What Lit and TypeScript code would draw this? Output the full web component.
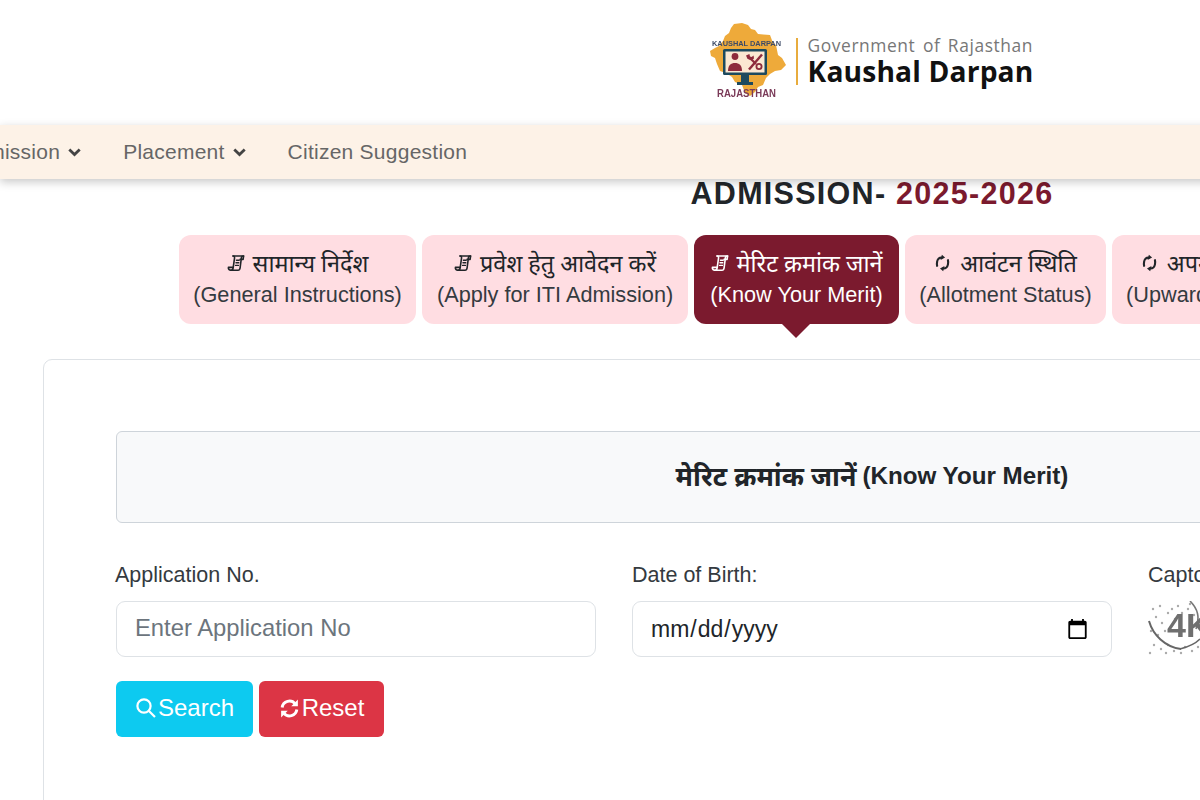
import { LitElement, html, css, svg } from "lit";
import { customElement } from "lit/decorators.js";

const scroll = svg`<svg class="ico" viewBox="0 0 18 18" width="18" height="18" fill="none" stroke="currentColor" stroke-width="1.6" stroke-linejoin="round" stroke-linecap="round"><path d="M6 2h10.6l-.5 3.4h-3"/><path d="M6 2c1.4 0 1.7 1 1.5 2.4L6.2 13.6c-.2 1.4-.9 2.6-2.4 2.6H11c1.2 0 1.9-.9 2.1-2.2L14.4 3.6c.1-1 .8-1.6 2.2-1.6"/><path d="M1.4 13.4h4.8M1.4 13.4c-.3 1.6.8 2.8 2.4 2.8"/><path d="M9.4 6.2h2.8M9 8.8h2.8M8.6 11.4h2.8" stroke-width="1.4"/></svg>`;
const cycle = svg`<svg class="ico cy" viewBox="0 0 16 18" width="16" height="18" fill="none" stroke="currentColor" stroke-width="2.1" stroke-linecap="round"><g transform="skewX(-8) translate(2 0)"><path d="M6.4 3.6C3.8 3.4 2.4 5 2.2 7.4c-.1 1.6 0 3 .6 4.4"/><path d="M9.2 14.4c2.6.2 4-1.4 4.2-3.8.1-1.6 0-3-.6-4.4"/><path d="M6 .8l3.6 2.8L5.4 6z" fill="currentColor" stroke="none"/><path d="M9.6 17.2L6 14.4l4.2-2.4z" fill="currentColor" stroke="none"/></g></svg>`;
const chev = svg`<svg class="chev" viewBox="0 0 13 9" width="13" height="9" fill="none" stroke="currentColor" stroke-width="2.8"><path d="M1.3 1.6 6.5 6.6l5.2-5"/></svg>`;

const tabs = [
  { hi: "सामान्य निर्देश", en: "(General Instructions)", icon: scroll, w: 237 },
  { hi: "प्रवेश हेतु आवेदन करें", en: "(Apply for ITI Admission)", icon: scroll, w: 266.2 },
  { hi: "मेरिट क्रमांक जानें", en: "(Know Your Merit)", icon: scroll, w: 204.6, active: true },
  { hi: "आवंटन स्थिति", en: "(Allotment Status)", icon: cycle, w: 201.5 },
  { hi: "अपग्रेडेशन स्थिति", en: "(Upward Movement)", icon: cycle, w: 224 },
];

const dots = [[5,8],[12,5],[20,12],[8,16],[14,22],[3,30],[10,34],[17,30],[6,44],[13,48],[20,44],[26,50],[24,8],[30,5],[34,12],[27,18],[40,8],[46,14],[37,46],[44,50],[50,46],[2,52],[18,52],[33,52],[42,3]];

@customElement("app-root")
export class AppRoot extends LitElement {
  static styles = css`
    :host { display: block; width: 1200px; height: 800px; overflow: hidden; background: #fff; color: #212529; font-family: "Liberation Sans", Arial, sans-serif; }
    .page { width: 1744px; }
    header { height: 125px; display: flex; justify-content: center; align-items: flex-start; padding: 22px 3px 0 0; box-sizing: border-box; }
    .logo { display: flex; align-items: center; gap: 8px; height: 80px; }
    .mark { filter: blur(.4px); }
    .divider { width: 2px; height: 47px; background: #e8ac3d; margin: -2px 2px 0 0; }
    .brand { display: flex; flex-direction: column; font-family: "Open Sans", sans-serif; margin-top: -4px; }
    .gov { font-size: 17.4px; line-height: 22px; color: #777; letter-spacing: .58px; word-spacing: 2.4px; white-space: nowrap; }
    .kd { font-size: 28.2px; line-height: 30px; font-weight: 700; color: #111; white-space: nowrap; letter-spacing: .15px; }
    nav { height: 54px; background: #fdf2e7; box-shadow: 0 3px 9px rgba(0,0,0,.22); display: flex; align-items: center; gap: 42px; position: relative; color: #666; font-size: 21px; letter-spacing: .25px; white-space: nowrap; }
    nav .item { display: flex; align-items: center; gap: 8px; }
    nav .first { margin-left: -39px; }
    nav .item span { display: block; margin-top: -1px; }
    .chev { color: #444; }
    h1 { margin: 0; height: 56px; text-align: center; font-size: 30.5px; line-height: 28px; font-weight: 700; letter-spacing: 1.28px; color: #212529; }
    h1 span { color: #7b1a2e; }
    .tabs { display: flex; gap: 6px; padding-left: 179px; }
    .tab { box-sizing: border-box; height: 89px; border-radius: 12px; background: #ffdde2; display: flex; flex-direction: column; align-items: center; justify-content: center; font-size: 21.7px; line-height: 31px; color: #343a40; white-space: nowrap; position: relative; flex: none; padding-bottom: 2px; }
    .tab.active { background: #7b1a2e; color: #fff; }
    .tab.active::after { content: ""; position: absolute; left: 50%; top: 100%; margin-left: -14px; border: 14px solid transparent; border-bottom: 0; border-top-color: #7b1a2e; }
    .hi { display: flex; align-items: center; gap: 8px; font-family: "Noto Sans", "Liberation Sans", sans-serif; font-size: 23.4px; color: #212529; }
    .active .hi { color: #fff; }
    .ico { flex: none; }
    .cy { margin-right: 2px; }
    .card { margin: 35px 0 0 43px; width: 1658px; height: 600px; box-sizing: border-box; border: 1px solid #dee2e6; border-radius: 9px; padding: 71px 72px 0; }
    .title { height: 92px; box-sizing: border-box; border: 1px solid #ced4da; border-radius: 6px; background: #f8f9fa; display: flex; align-items: center; justify-content: center; gap: 6px; font-size: 24.2px; font-weight: 700; color: #212529; padding-bottom: 3px; }
    .title .big { font-family: "Noto Sans", "Liberation Sans", sans-serif; font-size: 26.8px; line-height: 36px; }
    .form { display: grid; grid-template-columns: repeat(3, 480px); column-gap: 36px; margin-top: 39px; }
    label { display: block; font-size: 21.5px; line-height: 26px; color: #343a40; margin: 0 0 13px; white-space: nowrap; }
    .shift { margin-left: -1px; }
    input { box-sizing: border-box; display: block; width: 480px; height: 56px; border: 1px solid #dee2e6; border-radius: 9px; padding: 0 18px 2px; font: 23.8px "Liberation Sans", Arial, sans-serif; color: #212529; background: #fff; }
    input[type="date"] { font-size: 23px; padding: 0 20px 0 17px; }
    input::placeholder { color: #6c757d; }
    .captcha { display: block; filter: blur(.5px); }
    .actions { display: flex; gap: 6px; margin-top: 24px; }
    button { height: 56px; border: 0; border-radius: 6px; display: flex; align-items: center; justify-content: center; gap: 1px; font: 24px "Liberation Sans", Arial, sans-serif; color: #fff; padding: 0 0 2px; }
    .search { width: 137px; background: #0dcaf0; }
    .reset { width: 125px; background: #dc3545; gap: 2px; }
  `;

  render() {
    return html`<div class="page">
      <header>
        <div class="logo">
          <svg class="mark" width="80" height="80" viewBox="0 0 80 80" role="img" aria-label="Kaushal Darpan logo">
            <path d="M34 1l6 2 3 4 4 1 3 4 12 1 3 8 3 2 2 10 4 3 4 7-5 5-6 1-5 3-4 4-3 7-5 2-3 5-5 4-5-3-3-8-7-3-3-5-6-4-6-2-3-7-2-6-4-2-1-5 5-3 4-2 4-5 2-5 4-3 2-5 3-4z" fill="#eeaa3a"/>
            <text x="38.5" y="24" text-anchor="middle" font-family="Liberation Sans" font-size="7.6" font-weight="700" fill="#3c4a66" textLength="69" lengthAdjust="spacingAndGlyphs">KAUSHAL DARPAN</text>
            <rect x="15" y="27" width="44" height="26" fill="#1d4a5e" rx="1.5"/>
            <rect x="17.5" y="29.5" width="39" height="21" fill="#fbe8d2"/>
            <circle cx="27" cy="34.5" r="3.4" fill="#8e2b3c"/>
            <path d="M20 49c0-6 3-8 7-8s7 2 7 8z" fill="#8e2b3c"/>
            <path d="M38 33.5l3.4-1.6.6 2.6 1.6.4 2-1.4.4 3-2.4 1.8-1.6-.2-2.6-1.4z" fill="#8e2b3c"/>
            <path d="M43 37l5 5" stroke="#8e2b3c" stroke-width="2.2"/>
            <path d="M54 32.5 L41 47.5" stroke="#8e2b3c" stroke-width="2.4"/>
            <circle cx="51" cy="44.5" r="2.6" fill="none" stroke="#8e2b3c" stroke-width="1.8"/>
            <rect x="33" y="53" width="8" height="7" fill="#1d4a5e"/><rect x="29" y="60" width="16" height="3" fill="#1d4a5e"/>
            <text x="38.5" y="74.5" text-anchor="middle" font-family="Liberation Sans" font-size="10" font-weight="700" fill="#7a3a58" textLength="59" lengthAdjust="spacingAndGlyphs">RAJASTHAN</text>
          </svg>
          <div class="divider"></div>
          <div class="brand"><div class="gov">Government of Rajasthan</div><div class="kd">Kaushal Darpan</div></div>
        </div>
      </header>
      <nav>
        <div class="item first"><span>Admission</span> ${chev}</div>
        <div class="item"><span>Placement</span> ${chev}</div>
        <div class="item"><span>Citizen Suggestion</span></div>
      </nav>
      <h1>ADMISSION- <span>2025-2026</span></h1>
      <div class="tabs">
        ${tabs.map(t => html`<div class="tab ${t.active ? "active" : ""}" style="width:${t.w}px"><div class="hi">${t.icon}<span>${t.hi}</span></div><div>${t.en}</div></div>`)}
      </div>
      <div class="card">
        <div class="title"><span class="big">मेरिट क्रमांक जानें</span><span>(Know Your Merit)</span></div>
        <div class="form">
          <div><label class="shift">Application No.</label><input type="text" placeholder="Enter Application No" /></div>
          <div><label>Date of Birth:</label><input type="date" /></div>
          <div><label>Captcha</label>
            <svg class="captcha" width="160" height="56" viewBox="0 0 160 56">
              <g fill="#aaa">${dots.map(d => svg`<circle cx=${d[0]} cy=${d[1]} r="1.2"/>`)}</g>
              <path d="M1 20c4 14 16 26 32 28" fill="none" stroke="#666" stroke-width="2"/>
              <path d="M32 48c8-2 14-4 20-10" fill="none" stroke="#666" stroke-width="1.6"/>
              <path d="M42 0c8 8 10 16 6 28" fill="none" stroke="#777" stroke-width="1.6"/>
              <text x="19" y="36" font-family="Liberation Sans" font-size="34" font-weight="700" fill="#6f6f6f">4K</text>
            </svg>
          </div>
        </div>
        <div class="actions">
          <button class="search"><svg width="22" height="22" viewBox="0 0 22 22" fill="none" stroke="currentColor" stroke-width="2.2"><circle cx="9" cy="9" r="6.6"/><path d="M14 14l6 6"/></svg>Search</button>
          <button class="reset"><svg width="21" height="21" viewBox="0 0 20 20" fill="none" stroke="currentColor" stroke-width="2.8"><path d="M3 9a7 7 0 0 1 12.4-3.4"/><path d="M17 11a7 7 0 0 1-12.4 3.4"/><path d="M18 1.5v6.3h-6.3z" fill="currentColor" stroke="none"/><path d="M2 18.5v-6.3h6.3z" fill="currentColor" stroke="none"/></svg>Reset</button>
        </div>
      </div>
    </div>`;
  }
}
